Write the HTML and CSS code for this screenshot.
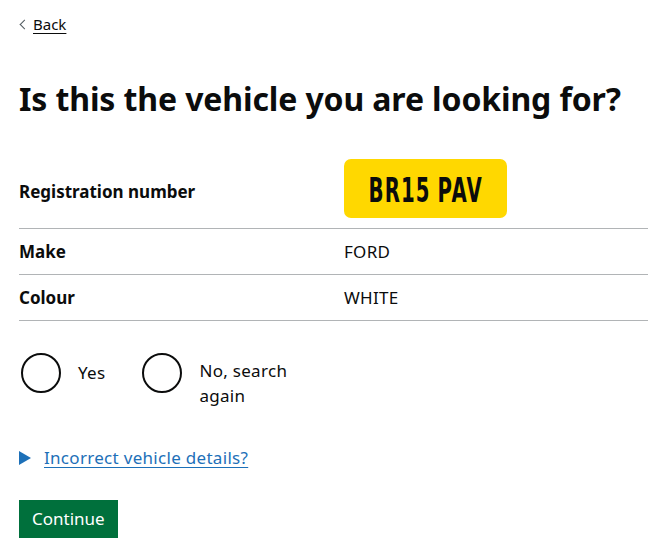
FILE: index.html
```html
<!DOCTYPE html>
<html lang="en">
<head>
<meta charset="utf-8">
<title>Is this the vehicle you are looking for?</title>
<link rel="stylesheet" href="styles.css">
</head>
<body>
<div class="page">
  <a class="back-link" href="#">Back</a>
  <h1 class="heading">Is this the vehicle you are looking for?</h1>
  <dl class="summary">
    <div class="summary-row summary-row--plate">
      <dt class="summary-key">Registration number</dt>
      <dd class="summary-value"><span class="plate"><span class="plate-text">BR15 PAV</span></span></dd>
    </div>
    <div class="summary-row">
      <dt class="summary-key">Make</dt>
      <dd class="summary-value">FORD</dd>
    </div>
    <div class="summary-row">
      <dt class="summary-key">Colour</dt>
      <dd class="summary-value">WHITE</dd>
    </div>
  </dl>
  <div class="radios">
    <label class="radio">
      <input class="radio-input" type="radio" name="confirm">
      <span class="radio-circle"></span>
      <span class="radio-label">Yes</span>
    </label>
    <label class="radio">
      <input class="radio-input" type="radio" name="confirm">
      <span class="radio-circle"></span>
      <span class="radio-label radio-label--narrow">No, search again</span>
    </label>
  </div>
  <div class="details">
    <span class="details-arrow"></span>
    <a class="details-link" href="#">Incorrect vehicle details?</a>
  </div>
  <button class="button" type="button">Continue</button>
</div>
</body>
</html>
```

FILE: styles.css
```css
* { box-sizing: border-box; }
html, body { margin: 0; padding: 0; background: #fff; }
body {
  font-family: "Noto Sans", "Liberation Sans", sans-serif;
  color: #0b0c0c;
}
.page {
  padding: 13px 19px 0 19px;
}
.back-link {
  display: inline-block;
  position: relative;
  padding-left: 14px;
  font-size: 15px;
  line-height: 20px;
  color: #0b0c0c;
  text-decoration: underline;
  text-underline-offset: 3px;
}
.back-link::before {
  content: "";
  position: absolute;
  left: 2px;
  top: 7px;
  width: 6px;
  height: 6px;
  border-left: 1px solid #505a5f;
  border-bottom: 1px solid #505a5f;
  transform: rotate(45deg);
}
.heading {
  margin: 44px 0 0 0;
  font-size: 32px;
  line-height: 40px;
  font-weight: 700;
  letter-spacing: -0.12px;
}
.summary {
  margin: 30px 0 0 0;
  width: 629px;
  font-size: 17px;
}
.summary-row {
  display: grid;
  grid-template-columns: 325px 1fr;
  align-items: center;
  border-bottom: 1px solid #b1b4b6;
  height: 46px;
}
.summary-row--plate {
  height: 80px;
  padding-top: 10px;
  padding-bottom: 11px;
}
.summary-key {
  font-weight: 700;
  margin: 0;
}
.summary-row--plate .summary-key { padding-top: 6px; }
.summary-value { margin: 0; letter-spacing: 0.3px; }
.plate {
  display: inline-flex;
  align-items: center;
  justify-content: center;
  width: 163px;
  height: 59px;
  background: #ffd800;
  border-radius: 7px;
  overflow: hidden;
  white-space: nowrap;
}
.plate-text {
  display: inline-block;
  font-family: "DejaVu Sans", sans-serif;
  font-weight: 700;
  font-size: 34px;
  line-height: 34px;
  letter-spacing: 2px;
  word-spacing: -2px;
  color: #0b0c0c;
  transform: scaleX(0.58);
  margin-top: 2px;
}
.radios {
  display: flex;
  margin-top: 32px;
}
.radio {
  display: flex;
  align-items: flex-start;
  margin-right: 20px;
  cursor: pointer;
}
.radio-input { display: none; }
.radio-circle {
  flex: none;
  width: 40px;
  height: 40px;
  margin: 0 0 0 2px;
  border: 2px solid #0b0c0c;
  border-radius: 50%;
}
.radio-label {
  padding: 7px 15px 0 17px;
  font-size: 17px;
  line-height: 25px;
  letter-spacing: 0.3px;
}
.radio-label--narrow { max-width: 125px; padding-top: 5px; }
.details {
  display: flex;
  align-items: center;
  margin-top: 37px;
}
.details-arrow {
  width: 0;
  height: 0;
  border-left: 12px solid #1d70b8;
  border-top: 7px solid transparent;
  border-bottom: 7px solid transparent;
  margin-right: 13px;
}
.details-link {
  font-size: 17px;
  line-height: 25px;
  letter-spacing: 0.3px;
  color: #1d70b8;
  text-decoration: underline;
  text-underline-offset: 3px;
}
.button {
  display: block;
  margin-top: 30px;
  padding: 7px 13px 7px 13px;
  background: #00703c;
  color: #fff;
  border: 0;
  border-radius: 0;
  box-shadow: 0 2px 0 #002d18;
  font-family: "Noto Sans", "Liberation Sans", sans-serif;
  font-size: 17px;
  line-height: 24px;
  height: 38px;
}
```
